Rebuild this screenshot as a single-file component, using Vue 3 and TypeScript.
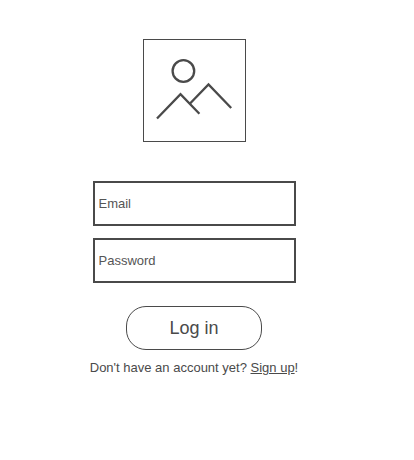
<script setup lang="ts">
import { ref } from 'vue'

const email = ref('')
const password = ref('')
</script>

<template>
  <main class="login">
    <svg class="logo" viewBox="0 0 103 103" role="img" aria-label="Logo">
      <rect x="0.5" y="0.5" width="102" height="102" stroke-width="1" />
      <circle cx="40.4" cy="32" r="10.8" stroke-width="2.3" />
      <path d="M14 79.5 L37.5 55.2 L56.4 74.8" stroke-width="2.3" />
      <path d="M46.8 64.8 L65.5 45.4 L88.2 69" stroke-width="2.3" />
    </svg>
    <form class="form" @submit.prevent>
      <input v-model="email" class="field" type="email" placeholder="Email" aria-label="Email" />
      <input v-model="password" class="field" type="password" placeholder="Password" aria-label="Password" />
      <button class="submit" type="submit">Log in</button>
    </form>
    <p class="signup">Don't have an account yet? <a href="#">Sign up</a>!</p>
  </main>
</template>

<style>
body {
  margin: 0;
  background: #fff;
}
</style>

<style scoped>
.login {
  display: flex;
  flex-direction: column;
  align-items: center;
  padding: 39px 26px 24px 0;
  color: #4a4a4a;
  font-family: "Liberation Sans", Arial, sans-serif;
  font-size: 13px;
  line-height: 16px;
}

.logo {
  display: block;
  width: 103px;
  fill: none;
  stroke: #4a4a4a;
}

.form {
  display: flex;
  flex-direction: column;
  align-items: center;
  gap: 12px;
  margin-top: 39px;
}

.field {
  box-sizing: border-box;
  width: 203px;
  height: 45px;
  padding: 0 4px;
  border: 2px solid #4a4a4a;
  border-radius: 0;
  background: #fff;
  color: inherit;
  font: inherit;
}

.field::placeholder {
  color: #555;
  opacity: 1;
}

.submit {
  box-sizing: border-box;
  width: 136px;
  height: 44px;
  margin-top: 11px;
  padding: 0;
  border: 1px solid #4a4a4a;
  border-radius: 20px;
  background: #fff;
  color: inherit;
  font-family: inherit;
  font-size: 18px;
  cursor: pointer;
}

.signup {
  margin: 10px 0 0;
}

.signup a {
  color: inherit;
}
</style>
